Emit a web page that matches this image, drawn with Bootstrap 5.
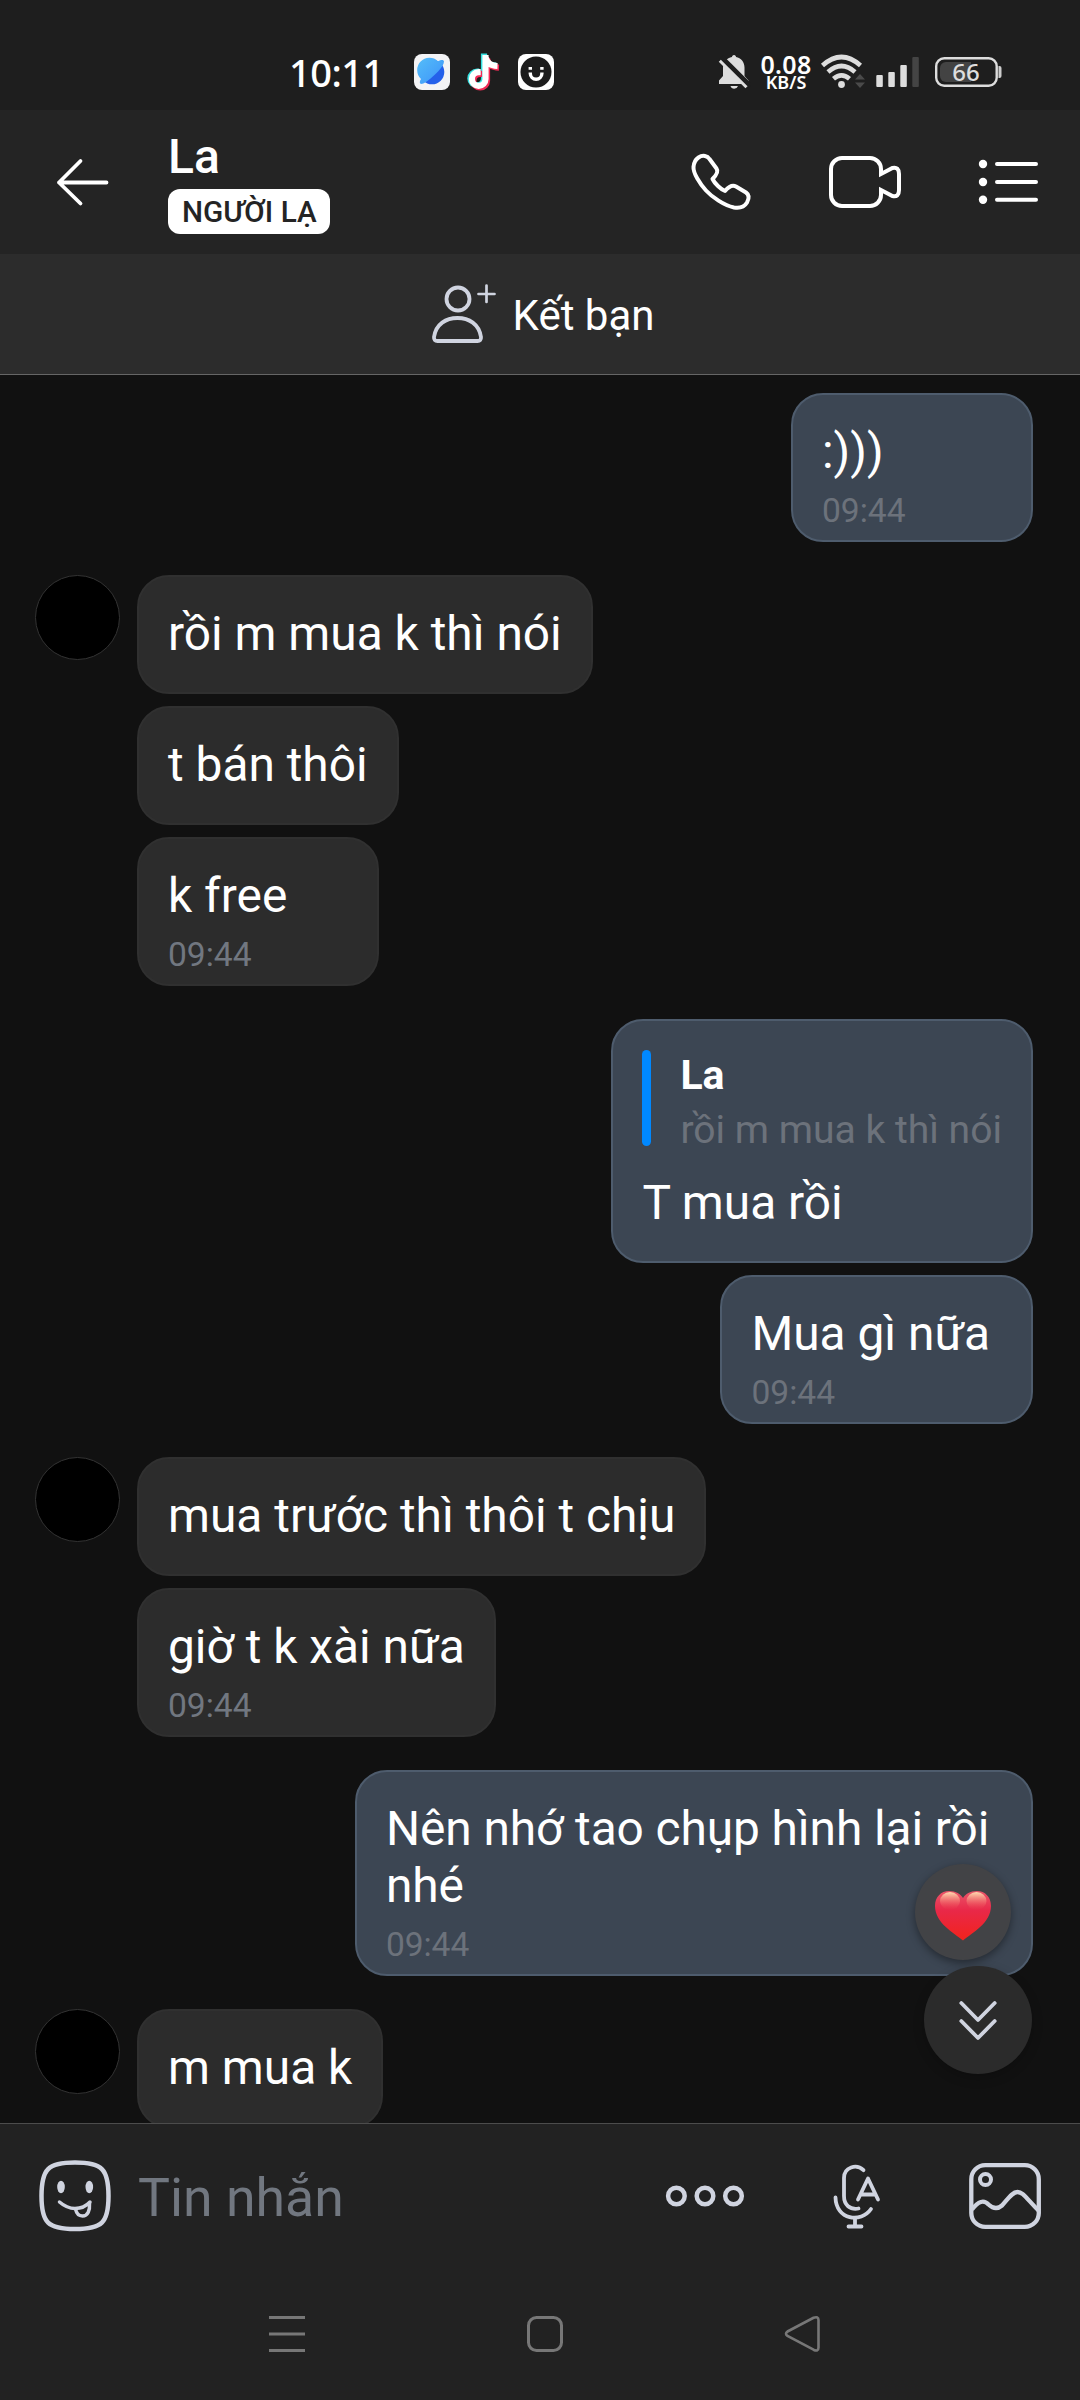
<!DOCTYPE html>
<html lang="vi" data-bs-theme="dark">
<head>
<meta charset="utf-8">
<meta name="viewport" content="width=device-width, initial-scale=1">
<title>La</title>
<link href="https://cdn.jsdelivr.net/npm/bootstrap@5.3.0/dist/css/bootstrap.min.css" rel="stylesheet">
<style>
  body { font-family: Roboto, "Noto Sans", sans-serif; background: #111; color: #fff; }
  svg { display: block; flex: none; }
  .phone-screen { width: 1080px; height: 2400px; background: #111; }
  .status-bar { height: 110px; padding: 34px 78px 0 292px; background: #1e1e1e; font-family: "Noto Sans", sans-serif; }
  .clock { width: 121px; font-size: 38px; line-height: 38px; font-weight: 500; letter-spacing: -.5px; margin-left: -3px; }
  .net-speed { width: 56px; margin: 0 6px 0 7px; text-align: center; font-weight: 600; }
  .net-speed .rate { font-size: 25px; line-height: 19px; letter-spacing: .3px; }
  .net-speed .unit { font-size: 18px; line-height: 16px; }
  .chat-header { height: 144px; padding: 0 38px 0 50px; background: #242424; }
  .chat-title { margin-left: 52px; padding-bottom: 2px; }
  .chat-name { font-size: 48px; line-height: 57px; font-weight: 500; margin-bottom: 4px; }
  .stranger-tag { height: 45px; padding: 0 13px 0 14px; border-radius: 12px; background: #fff; color: #242424; font-size: 29.7px; line-height: 45px; font-weight: 500; }
  .add-friend { height: 121px; padding-left: 4px; background: #2c2c2c; border-bottom: 1px solid #666; font-size: 42px; line-height: 50px; }
  .chat-log { padding: 18px 47px 0 35px; min-height: 0; gap: 33px; }
  .msg-group { gap: 12px; }
  .msg-group.mine { align-items: flex-end; }
  .avatar-dot { width: 85px; height: 85px; background: #000; border: 1px solid #333; margin-right: 17px; flex: none; }
  .bubble { border: 2px solid #303030; border-radius: 32px; background: #2c2c2c; padding: 29px; font-size: 47.85px; line-height: 57px; min-width: 242px; }
  .bubble.timed { padding-bottom: 9px; }
  .mine .bubble { background: #3c4653; border-color: #4e5c6d; }
  .sent-at { margin-top: 10px; font-size: 33.6px; line-height: 40px; color: #717780; }
  .mine .sent-at { color: #6c727b; }
  .long-line { width: 678px; letter-spacing: -.09px; }
  .quoted { height: 96px; margin-bottom: 29px; font-size: 39.1px; }
  .quoted .stripe { width: 9px; border-radius: 5px; background: #0088ff; margin-right: 29px; }
  .quoted .who { font-size: 41px; line-height: 48px; font-weight: 700; margin-top: 1px; }
  .quoted .said { line-height: 46px; margin-top: 8px; color: #6c727b; }
  .heart-btn { position: absolute; left: 915px; top: 1489px; width: 96px; height: 96px; background: #424346; box-shadow: 0 3px 8px rgba(0,0,0,.4); }
  .jump-btn { position: absolute; left: 924px; top: 1591px; width: 108px; height: 108px; background: #2b2b2b; box-shadow: 0 4px 12px rgba(0,0,0,.2); }
  .composer { border-top: 1px solid #4c4c4c; background: #222; }
  .compose-row { height: 144px; padding: 0 35px 0 36px; }
  .compose-hint { font-size: 53.6px; line-height: 62px; color: #717780; margin-left: 24px; padding-top: 4px; }
  .sys-nav { height: 132px; padding: 0 255px 0 264px; }
</style>
</head>
<body>
<div class="phone-screen d-flex flex-column overflow-hidden">

  <div class="status-bar flex-shrink-0 d-flex align-items-center">
    <div class="clock">10:11</div>
    <div class="d-flex align-items-center me-auto ps-1">
      <svg width="36" height="36" viewBox="413 54 36 36"><defs><linearGradient id="gb" x1="0" y1="0" x2="1" y2="1"><stop offset="0" stop-color="#55bdf8"/><stop offset="1" stop-color="#3c93fa"/></linearGradient></defs><rect x="413" y="54" width="36" height="36" rx="8" fill="#f3f3f5"/><circle cx="431" cy="72" r="12.3" fill="#2460ea"/><path d="M420 79A12.3 12.3 0 0 1 437 61.2C440 59.5 443 59.3 443 61.5Q443 66 434 74.5Q424 84 420 84Q417.500 83 420 79Z" fill="url(#gb)"/></svg>
      <svg class="mx-3" width="36" height="38" viewBox="465 53 36 38"><g fill="none" stroke-width="6.2"><path d="M484.500 54V79a6.800 6.800 0 1 1-6.800-6.800h2M484.500 57q1.500 8.500 12 9" stroke="#36e0e0" transform="translate(-1.500 -.5)"/><path d="M484.500 56V79a6.800 6.800 0 1 1-6.800-6.800h2M484.500 57q1.500 8.500 12 9" stroke="#f22c56" transform="translate(1.500 1.700)"/><path d="M484.500 55V79a6.800 6.800 0 1 1-6.800-6.800h2M484.500 57q1.500 8.500 12 9" stroke="#fff"/></g></svg>
      <svg width="36" height="36" viewBox="517 54 36 36"><rect x="517" y="54" width="36" height="36" rx="8" fill="#fff"/><circle cx="535" cy="72" r="15.500" fill="#1c1c1c"/><path d="M529.300 72.500v1a5.800 5.800 0 0 0 11.600 0v-1M529.300 67v2.800M540.900 67v2.800" fill="none" stroke="#fff" stroke-width="3.400"/></svg>
    </div>
    <svg width="34" height="36" viewBox="718 54 34 36"><path d="M735 55c1.300 0 2 1 2 2 5 1 8.500 5 8.500 10.500V76l4 4.500V84H720v-3.500l4-4.500v-8.500C724 62 728 58 733 57c0-1 .7-2 2-2ZM731.500 86h7.500q-1 2.800-3.800 2.800T731.500 86Z" fill="#ddd"/><path d="M722 57.500 751 86.500" stroke="#1e1e1e" stroke-width="6"/><path d="M720.800 60.800 747.500 87.200" stroke="#ddd" stroke-width="3"/></svg>
    <div class="net-speed"><div class="rate">0.08</div><div class="unit">KB/S</div></div>
    <svg width="46" height="36" viewBox="820 54 46 36"><g fill="none" stroke="#ddd" stroke-width="4.600"><path d="M822.500 65.500q19-17 38 0"/><path d="M828 72q13.500-12 27 0"/><path d="M833.500 78.800q8-7 16 0"/></g><circle cx="841.500" cy="84.500" r="3.400" fill="#ddd"/><path d="M855 79.500 860 74l5 5.500ZM855 82.500l5 5.500 5-5.500Z" fill="#4a4a4a"/></svg>
    <svg width="53" height="36" viewBox="866 54 53 36"><g fill="#ddd"><rect x="876.300" y="75" width="6.500" height="12" rx="1"/><rect x="888.300" y="72" width="6.500" height="15" rx="1"/><rect x="900.300" y="65" width="6.500" height="22" rx="1"/></g><rect x="912.300" y="57" width="6.500" height="30" rx="1" fill="#444"/></svg>
    <svg width="83" height="36" viewBox="919 54 83 36"><rect x="936.200" y="58.200" width="60.500" height="27.500" rx="8" fill="none" stroke="#ddd" stroke-width="2.400"/><path d="M946 62h25v20h-25a6 6 0 0 1-6-6v-8a6 6 0 0 1 6-6Z" fill="#434343"/><path d="M998.500 66h1q2 0 2 2v8q0 2-2 2h-1Z" fill="#ccc"/><text x="966" y="81" font-size="24" font-weight="500" fill="#ddd" text-anchor="middle">66</text></svg>
  </div>

  <header class="chat-header flex-shrink-0 d-flex align-items-center">
    <svg width="66" height="60" viewBox="50 152 66 60"><path d="M80.500 161 59 182.500 80.500 203.500M59 182.500H106.500" fill="none" stroke="#fff" stroke-width="3.800" stroke-linecap="round" stroke-linejoin="round"/></svg>
    <div class="chat-title d-flex flex-column align-items-start me-auto">
      <div class="chat-name">La</div>
      <div class="stranger-tag">NGƯỜI LẠ</div>
    </div>
    <svg width="68" height="68" viewBox="688 148 68 68"><path d="M698.500 157.500C703 154.500 707.500 156 709.500 159L716.500 168.500C719 172 715.500 176 712.500 179C715 184 721 189.500 725 191C728 187.500 731.500 184 736 186.500L746 192.500C749.500 195 749.500 198 747 202.500C744 207.500 740 208.500 734 207.500C724 205.500 712 197 706 190.500C700 184 693 173 693.500 167Q694 160.500 698.500 157.500Z" fill="none" stroke="#fff" stroke-width="4" stroke-linejoin="round"/></svg>
    <svg width="219" height="60" viewBox="756 152 219 60"><path d="M842 158H870a11 11 0 0 1 11 11V174L892.500 168q6.500-1.500 6.500 6V190q0 7.500-6.500 6L881 190V195a11 11 0 0 1-11 11H842a11 11 0 0 1-11-11V169a11 11 0 0 1 11-11Z" fill="none" stroke="#fff" stroke-width="4"/></svg>
    <svg width="67" height="60" viewBox="975 152 67 60"><g fill="#fff"><circle cx="983" cy="164" r="4.200"/><circle cx="983" cy="182" r="4.200"/><circle cx="983" cy="199.700" r="4.200"/></g><path d="M997 164H1036M997 182H1036M997 199.700H1036" stroke="#fff" stroke-width="4" stroke-linecap="round"/></svg>
  </header>

  <div class="add-friend flex-shrink-0 d-flex align-items-center justify-content-center">
    <svg width="83" height="66" viewBox="430 280 83 66"><g fill="none" stroke="#d0d4e0" stroke-width="3.800" stroke-linejoin="round"><circle cx="458" cy="298" r="11.500"/><path d="M434 336C436 323 446 317 457.500 317S479 323 481 336Q481.300 340 477.500 340H437.500Q433.700 340 434 336Z"/><path d="M486.500 284.500V301M478.500 293H494.500" stroke-width="2.700" stroke-linecap="round"/></g></svg>
    <span class="pt-1">Kết bạn</span>
  </div>

  <main class="chat-log position-relative flex-grow-1 overflow-hidden d-flex flex-column">
    <div class="msg-group mine d-flex flex-column">
      <div class="bubble timed">:)))<div class="sent-at">09:44</div></div>
    </div>

    <div class="d-flex align-items-start">
      <div class="avatar-dot rounded-circle"></div>
      <div class="msg-group d-flex flex-column align-items-start">
        <div class="bubble">rồi m mua k thì nói</div>
        <div class="bubble">t bán thôi</div>
        <div class="bubble timed">k free<div class="sent-at">09:44</div></div>
      </div>
    </div>

    <div class="msg-group mine d-flex flex-column">
      <div class="bubble">
        <div class="quoted d-flex">
          <div class="stripe"></div>
          <div><div class="who">La</div><div class="said">rồi m mua k thì nói</div></div>
        </div>
        T mua rồi
      </div>
      <div class="bubble timed">Mua gì nữa&nbsp;<div class="sent-at">09:44</div></div>
    </div>

    <div class="d-flex align-items-start">
      <div class="avatar-dot rounded-circle"></div>
      <div class="msg-group d-flex flex-column align-items-start">
        <div class="bubble">mua trước thì thôi t chịu</div>
        <div class="bubble timed">giờ t k xài nữa<div class="sent-at">09:44</div></div>
      </div>
    </div>

    <div class="msg-group mine d-flex flex-column">
      <div class="bubble timed long-line">Nên nhớ tao chụp hình lại rồi nhé<div class="sent-at">09:44</div></div>
    </div>

    <div class="d-flex align-items-start">
      <div class="avatar-dot rounded-circle"></div>
      <div class="msg-group d-flex flex-column align-items-start">
        <div class="bubble">m mua k</div>
      </div>
    </div>

    <div class="heart-btn rounded-circle d-flex align-items-center justify-content-center pt-2">
      <svg width="60" height="54" viewBox="934 1889 60 54"><defs><linearGradient id="hr" x1="0" y1="0" x2="0" y2="1"><stop offset="0" stop-color="#e9556a"/><stop offset=".4" stop-color="#e92848"/><stop offset="1" stop-color="#f2231c"/></linearGradient><linearGradient id="hl" x1="0" y1="0" x2="0" y2="1"><stop offset="0" stop-color="#ffdcb0"/><stop offset="1" stop-color="#f04a50" stop-opacity="0"/></linearGradient></defs><path d="M964 1940.500C955 1933 936 1923 936 1906C936 1897 942 1891 950 1891C957 1891 961.500 1894 964 1898C966.500 1894 971 1891 978 1891C986 1891 992 1897 992 1906C992 1923 973 1933 964 1940.500Z" fill="url(#hr)"/><ellipse cx="951" cy="1901" rx="10" ry="9" fill="url(#hl)"/><ellipse cx="977.500" cy="1901" rx="10" ry="9" fill="url(#hl)"/></svg>
    </div>
    <div class="jump-btn rounded-circle d-flex align-items-center justify-content-center">
      <svg width="44" height="46" viewBox="956 1997 44 46"><path d="M961.300 2003 978 2020 994.700 2003M961.300 2021 978 2038 994.700 2021" fill="none" stroke="#d0d4e0" stroke-width="3.800" stroke-linecap="round" stroke-linejoin="round"/></svg>
    </div>
  </main>

  <footer class="composer flex-shrink-0">
    <div class="compose-row d-flex align-items-center">
      <svg width="78" height="78" viewBox="36 2157 78 78"><g fill="none" stroke="#d0d4e0" stroke-linecap="round"><path d="M75 2162.500C102 2162.500 108.500 2169 108.500 2196S102 2229 75 2229S41.500 2223 41.500 2196S48 2162.500 75 2162.500Z" stroke-width="4.500"/><path d="M59.500 2202Q67 2208.500 75 2208.500Q84 2208.500 90 2202" stroke-width="3.500"/><path d="M75.500 2209Q77 2216 82.500 2216C88 2216 90 2210 89.500 2203.500" stroke-width="3.500"/></g><g fill="#d0d4e0"><ellipse cx="61" cy="2187" rx="3.800" ry="6.200"/><ellipse cx="89.300" cy="2187" rx="3.800" ry="6.200"/></g></svg>
      <span class="compose-hint me-auto">Tin nhắn</span>
      <svg width="86" height="40" viewBox="662 2176 86 40"><g fill="none" stroke="#d0d4e0" stroke-width="4.500"><circle cx="676.400" cy="2196" r="8.300"/><circle cx="705" cy="2196" r="8.300"/><circle cx="733.500" cy="2196" r="8.300"/></g></svg>
      <svg width="217" height="76" viewBox="748 2158 217 76"><g fill="none" stroke="#d0d4e0" stroke-width="3.800" stroke-linecap="round" stroke-linejoin="round"><path d="M863.500 2170.200C856.500 2163.500 844 2167 844 2178V2196C844 2205 850 2210 858.500 2208.500"/><path d="M835.500 2197.500C836 2220 861 2223.500 871 2209"/><path d="M855 2218V2226M848.500 2226.500H861.500"/><path d="M858 2199.500 868 2178.500 878 2199.500M861.500 2194.500H874.500"/></g></svg>
      <svg width="80" height="76" viewBox="965 2158 80 76"><g fill="none" stroke="#d0d4e0" stroke-width="4.300"><rect x="971.300" y="2165.200" width="67.500" height="61.700" rx="14"/><circle cx="985.500" cy="2179.500" r="5.500" stroke-width="4"/><path d="M972 2209.500Q981.500 2197 988.500 2204.500Q995.500 2211 1002 2205.500C1008 2199 1012 2192 1017.500 2192C1023 2192 1026 2198 1039 2211"/></g></svg>
    </div>
    <div class="sys-nav d-flex align-items-center justify-content-between">
      <svg width="46" height="46" viewBox="264 2311 46 46"><path d="M269 2317.500H305M269 2334H305M269 2350.500H305" stroke="#777" stroke-width="3"/></svg>
      <svg width="46" height="46" viewBox="522 2311 46 46"><rect x="528.500" y="2317.500" width="33" height="33" rx="8" fill="none" stroke="#777" stroke-width="3"/></svg>
      <svg width="46" height="46" viewBox="779 2311 46 46"><path d="M787.500 2331.500 813.500 2317.800Q818.500 2316 818.500 2320V2347.500Q818.500 2352 813.500 2349.700L787.500 2336Q784.500 2333.800 787.500 2331.500Z" fill="none" stroke="#777" stroke-width="2.600"/></svg>
    </div>
  </footer>
</div>
<script src="https://cdn.jsdelivr.net/npm/bootstrap@5.3.0/dist/js/bootstrap.bundle.min.js"></script>
</body>
</html>
